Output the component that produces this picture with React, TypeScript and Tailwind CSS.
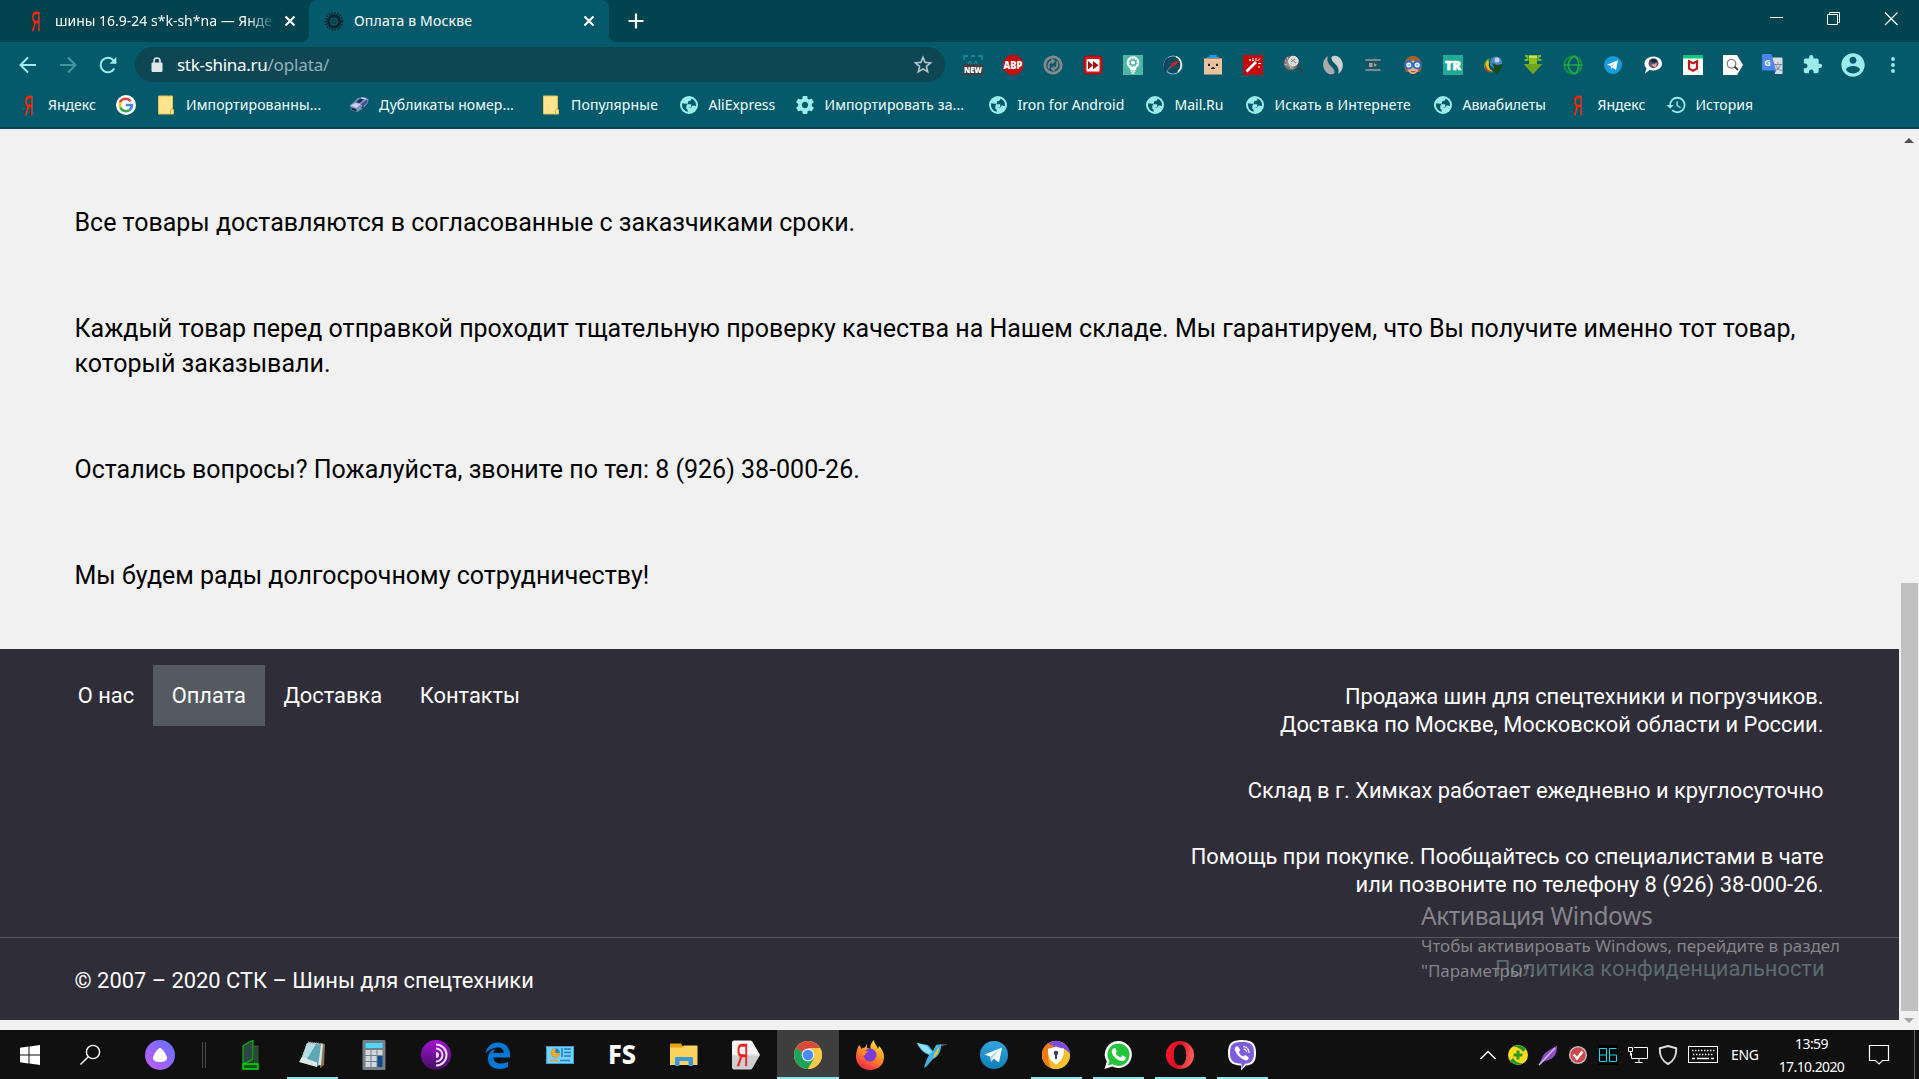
import type { ReactNode } from "react";

const Svg = ({ s = 20, vb = "0 0 20 20", children }: { s?: number; vb?: string; children: ReactNode }) => (
  <svg width={s} height={s} viewBox={vb} fill="none" className="block shrink-0 overflow-visible">
    {children}
  </svg>
);

/* ---------- browser icons ---------- */

const Ya = () => (
  <Svg>
    <text transform="translate(9.500 19.800) scale(0.45 1)" textAnchor="middle" fontFamily="Liberation Sans, sans-serif" fontSize="27.5" fill="#ff2400" stroke="#ff2400" strokeWidth="0.4">Я</text>
  </Svg>
);

const Google = () => (
  <Svg>
    <circle cx="10" cy="10" r="10" fill="#fff" />
    <path d="M15.2 6.2A6.2 6.2 0 0 0 4.6 7" stroke="#ea4335" strokeWidth="2.5" transform="translate(-.6 .2)" />
    <path d="M4.5 7.2a6.2 6.2 0 0 0 0 5.6" stroke="#fbbc05" strokeWidth="2.5" />
    <path d="M4.4 12.6A6.2 6.2 0 0 0 13.8 14.8" stroke="#34a853" strokeWidth="2.5" />
    <path d="M10 10h5.9a6 6 0 0 1-2.2 5" stroke="#4285f4" strokeWidth="2.5" />
  </Svg>
);

const Folder = () => (
  <Svg>
    <path d="M2.5 1h14v13l1 1v4h-15z" fill="#ffe48f" stroke="#e6c34e" />
    <path d="M14.5 18.5v-3.5l2-1.5" stroke="#d9b23c" />
  </Svg>
);

const Car = () => (
  <Svg>
    <path d="M1 10l4-3 4-4 6-1 4.500 2-.5 4-5 5.500L8 17l-6-2z" fill="#7d93c4" />
    <path d="M7 7.500l4-4 5-.5-5 5z" fill="#1c2c5c" />
    <path d="M1.500 10.500L6.500 8l5 1.200-4 3.800z" fill="#c5d1ea" />
    <path d="M12 9l6-4.500.5 3-5 4z" fill="#3c528b" />
    <path d="M2 12.500l5 1.500 1 2.500-5-1.500zM12 13l2.500-2.500v3z" fill="#1b2442" />
    <path d="M12 3l5 1" stroke="#dbe5f5" strokeWidth="1.200" />
  </Svg>
);

const Globe = () => (
  <Svg>
    <circle cx="10" cy="10" r="9" fill="#9ceceb" />
    <path d="M11.500 3.200c.3 1.600-.3 2.600-1.900 2.800-1.300.2-1.100 1-.9 1.900.2 1-.6 1.300-2 1.300H3c-.2 3 1 5 3 6.500 1.400 1 2.600 1.200 3.500 1.200v-2c-1.200 0-1.800-.7-1.800-1.700v-1h4.200c.9 0 1.300-.7 1.300-1.300 0-.6.5-.9 1.200-.9h2.600c0-2.800-1.500-5.600-5.500-6.800z" fill="#045a6b" transform="rotate(8 10 10)" />
    <path d="M8 9.200h4.200v2.800H7.200z" fill="#9ceceb" />
  </Svg>
);

const Gear = () => (
  <Svg vb="1 1 22 22">
    <path fill="#9ceceb" d="M19.430 12.980c.04-.32.07-.64.07-.98s-.03-.66-.07-.98l2.110-1.650c.19-.15.24-.42.12-.64l-2-3.460c-.12-.22-.39-.3-.61-.22l-2.490 1c-.52-.4-1.080-.73-1.690-.98l-.38-2.650C14.460 2.180 14.250 2 14 2h-4c-.25 0-.46.18-.49.42l-.38 2.650c-.61.25-1.170.59-1.690.98l-2.490-1c-.23-.09-.49 0-.61.22l-2 3.460c-.13.22-.07.49.12.64l2.110 1.650c-.04.32-.07.65-.07.98s.03.66.07.98l-2.110 1.650c-.19.15-.24.42-.12.64l2 3.460c.12.22.39.3.61.22l2.490-1c.52.4 1.080.73 1.690.98l.38 2.650c.03.24.24.42.49.42h4c.25 0 .46-.18.49-.42l.38-2.650c.61-.25 1.170-.59 1.690-.98l2.490 1c.23.09.49 0 .61-.22l2-3.460c.12-.22.07-.49-.12-.64l-2.110-1.650zM12 15.500c-1.930 0-3.500-1.570-3.500-3.500s1.570-3.500 3.500-3.500 3.500 1.570 3.500 3.500-1.570 3.500-3.500 3.500z" />
  </Svg>
);

const History = () => (
  <Svg vb="1 1 22 22">
    <path fill="#9ceceb" d="M13.500 3a9 9 0 0 0-9 9H1.500l3.900 3.900.07.14L9.500 12H6.500c0-3.870 3.130-7 7-7s7 3.130 7 7-3.130 7-7 7c-1.930 0-3.680-.79-4.940-2.060l-1.420 1.420A8.954 8.954 0 0 0 13.500 21a9 9 0 0 0 0-18zm-1 5v5l4.280 2.540.72-1.210-3.500-2.080V8h-1.500z" />
  </Svg>
);

const TireIcon = () => (
  <Svg>
    <circle cx="10" cy="10.500" r="5.600" stroke="#10262e" strokeWidth="3.200" />
    <circle cx="10" cy="10.500" r="8.300" stroke="#10262e" strokeWidth="2" strokeDasharray="1.300 1.500" />
    <circle cx="10" cy="10.500" r="2" stroke="#12303a" strokeWidth="1.200" />
  </Svg>
);

const Close = () => (
  <Svg s={10} vb="0 0 10 10">
    <path d="M.5.5l9 9M9.500.5l-9 9" stroke="#fff" strokeWidth="2.100" />
  </Svg>
);

const extensions: ReactNode[] = [
  <Svg>
    <path d="M1 5V1h4M8 1h4M15 1h4v4" stroke="#1695a5" strokeWidth="1.300" />
    <path d="M5 9l2-3 2 3M11 9l2-3 1 3" stroke="#1695a5" />
    <rect x="0" y="9" width="20" height="11" fill="#3c4043" />
    <text x="10" y="18" textAnchor="middle" fontFamily="Open Sans, sans-serif" fontWeight="800" fontSize="9" textLength="18" lengthAdjust="spacingAndGlyphs" fill="#fff">NEW</text>
  </Svg>,
  <Svg>
    <path d="M6 0h8l6 6v8l-6 6H6l-6-6V6z" fill="#c70d0d" />
    <text x="10" y="14" textAnchor="middle" fontFamily="Open Sans, sans-serif" fontWeight="800" fontSize="11" textLength="19" lengthAdjust="spacingAndGlyphs" fill="#fff">ABP</text>
  </Svg>,
  <Svg>
    <circle cx="10" cy="10" r="8.200" stroke="#888" strokeWidth="2.800" />
    <path d="M6 13.500C4.800 10 6 6.500 9.500 6M14 6.500c1.200 3.500 0 7-3.500 7.500" stroke="#888" strokeWidth="2" />
    <path d="M8.500 3l4 3.200-4 3.300zM11.500 17l-4-3.200 4-3.300z" fill="#888" />
  </Svg>,
  <Svg>
    <rect x="1" y="1" width="18" height="18" rx="3" fill="#d31616" stroke="#9c1111" />
    <rect x="3.500" y="4" width="13" height="12.500" rx="1" fill="#fff" />
    <path d="M5 6l5 4.200L5 14.500zM10 6l5.500 4.200L10 14.500z" fill="#a01010" />
  </Svg>,
  <Svg>
    <rect width="20" height="20" fill="#4cb8a4" />
    <path d="M10 1.200a6.300 6.300 0 0 1 3.500 11.500L12.800 15H7.200l-.7-2.300A6.300 6.300 0 0 1 10 1.200z" fill="#fff" />
    <circle cx="10" cy="7.500" r="2.800" stroke="#4cb8a4" strokeWidth="1.500" />
    <circle cx="10" cy="7.500" r="4" stroke="#4cb8a4" strokeWidth="1" strokeDasharray="1.600 1.540" />
    <path d="M7.500 16.200h5M8.300 18.200h3.400" stroke="#fff" strokeWidth="1.300" />
  </Svg>,
  <Svg>
    <circle cx="10" cy="10" r="9" fill="#0c4b5c" stroke="#7fb2c8" strokeWidth="1.100" />
    <path d="M13 1.600a9 9 0 0 1 2 15" stroke="#fff" strokeWidth="1.500" />
    <path d="M3 17C1 13 1 7 5 3" stroke="#153a63" strokeWidth="1.800" />
    <path d="M7 13l2-5 7-3-2 4-5 3-2.500 2z" fill="#c7262f" />
    <path d="M4 16l4-5" stroke="#5f7fa3" />
  </Svg>,
  <Svg>
    <path d="M6.500 0h7v2H16v2H4V2h2.500z" fill="#2196f3" />
    <rect x="1" y="3.500" width="18" height="16" fill="#e8c29c" />
    <path d="M1 3.500h18" stroke="#b58b62" />
    <path d="M5 8.700h2v2.300H5zM13 8.700h2v2.300h-2z" fill="#222" />
    <path d="M8 13l2-1 2 1v1H8z" fill="#222" />
  </Svg>,
  <Svg>
    <rect width="20" height="20" rx="1" fill="#c60a0a" />
    <path d="M3.500 16.500L13 7" stroke="#fff" strokeWidth="2.600" />
    <path d="M13 3v3M15 8.500h3M14.500 6l2.500-2.500M7 4v2M6 5h2M10 3v2M16 11v2M9 5.500h2" stroke="#fff" />
  </Svg>,
  <Svg>
    <path d="M13 10l7 7" stroke="#3a3a3a" strokeWidth="2" />
    <circle cx="8" cy="8" r="7.300" fill="#777" stroke="#4a4a4a" strokeDasharray="2 1" />
    <path d="M2 5l8 9M1 9l10 3M4 2l4 12" stroke="#b7b7b7" />
    <circle cx="10.500" cy="6" r="4.700" fill="#d5d5d5" stroke="#f1f1f1" />
    <path d="M8 4l5 4M8 7l4-3" stroke="#888" />
  </Svg>,
  <Svg>
    <path d="M5 1C-2 5-1 15 5 18.500c3 1.500 6 1 6.500-1C12 14 8 12 6 9 4 6 4 3 5 1z" fill="#a9a9a9" />
    <path d="M15 19C22 15 21 5 15 1.500 12 0 9 .5 8.500 2.500 8 6 12 8 14 11c2 3 2 6 1 8z" fill="#cfcfcf" />
  </Svg>,
  <Svg>
    <path d="M2.500 5h15M2.500 15h15" stroke="#7d8a8e" strokeWidth="1.800" />
    <path d="M5 7h10v6H5z" fill="#2e4b52" />
    <path d="M6 8h3.500v4H6zM11 8l3 2-3 2z" fill="#99a5a8" />
  </Svg>,
  <Svg>
    <path d="M3 17C0 11 1 1 10 1s10 10 7 16z" fill="#a6602b" />
    <path d="M4.500 8Q10 3 15.500 8v6c-1 4-4 5-5.500 5s-4.500-1-5.500-5z" fill="#f0b48c" />
    <circle cx="5.800" cy="10" r="3.500" fill="#fff" stroke="#2d6fc9" strokeWidth="2" />
    <circle cx="14.200" cy="10" r="3.500" fill="#fff" stroke="#2d6fc9" strokeWidth="2" />
    <circle cx="5.800" cy="10" r="1.300" fill="#8dc4ee" />
    <circle cx="14.200" cy="10" r="1.300" fill="#8dc4ee" />
    <path d="M8 16.200q2 1 4 0" stroke="#d33c33" strokeWidth="1.200" />
  </Svg>,
  <Svg>
    <rect width="20" height="20" fill="#22ab94" />
    <text x="10" y="15" textAnchor="middle" fontFamily="Open Sans, sans-serif" fontWeight="800" fontSize="12.500" textLength="16" lengthAdjust="spacingAndGlyphs" fill="#fff" stroke="#fff" strokeWidth=".6">TR</text>
  </Svg>,
  <Svg>
    <circle cx="13" cy="7.500" r="6" fill="#5186c4" />
    <circle cx="14" cy="5" r="2.500" fill="#b7d6f2" />
    <path d="M7 3C0 5-1 13 4 16c3 2 6 1 7 1-3-2-6-4-6-7s1-5 2-7z" fill="#58a13e" />
    <path d="M5 5C2 8 2 13 6 15.500l3 .5C6 14 5 11 6 7z" fill="#f4c21f" />
    <path d="M3 10c0 4 3 6 6 6.500L6 17c-4-1-5-5-3-7z" fill="#d3331c" />
    <path d="M9 8l5 2 5-1-1 5-5 5-3-3 1-3z" fill="#174a1c" />
  </Svg>,
  <Svg>
    <path d="M6 0h8v9h5l-9 10L1 9h5z" fill="#8cc21d" />
    <path d="M2 1h2.500v4H1.500M18 1h-2.500v4h3" stroke="#76b82a" strokeWidth="2" />
    <path d="M6 2h8" stroke="#c4e55b" strokeWidth="2" />
    <path d="M1 9h18l-9 10z" fill="#6fa51a" />
  </Svg>,
  <Svg>
    <circle cx="10" cy="10" r="8.700" stroke="#138a3b" strokeWidth="2.200" />
    <path d="M12 1c-9 4-9 14 0 18M12 1c5 5 5 13 0 18M1 10h18" stroke="#22aa4b" strokeWidth="1.700" />
  </Svg>,
  <Svg>
    <circle cx="10" cy="10" r="9" fill="#179cde" />
    <path d="M4 9.800L15 5.300 13 15l-3.500-2.600L8 14l-.3-3z" fill="#fff" />
    <path d="M8 11l5-4-3.800 4.700z" fill="#9fd2ee" />
  </Svg>,
  <Svg>
    <path d="M10.500 1.500c5 0 8.500 3 8.500 7s-3.500 7-8.500 7l-4-.5-4.500 3.500L3.500 13C2 12 1.500 10.500 1.500 8.500c0-4 4-7 9-7z" fill="#fff" />
    <circle cx="10.500" cy="8.300" r="5" fill="#5b5470" />
    <path d="M8 10l5 3 1-5z" fill="#d7a794" />
    <path d="M6.500 6q4-4 8 0l-3 2z" fill="#1f2337" />
  </Svg>,
  <Svg>
    <rect width="20" height="20" fill="#fff" />
    <rect width="20" height="3.500" fill="#08c77c" />
    <path d="M6 6.200l4 2 4-2v7.500L10 15.800l-4-2.100z" stroke="#c01818" strokeWidth="2.200" />
  </Svg>,
  <Svg>
    <path d="M0 0h14l6 10-6 10H0z" fill="#fff" />
    <circle cx="8.500" cy="8.800" r="4.300" stroke="#777" strokeWidth="1.200" />
    <path d="M11.500 11.500l3.500 3.500" stroke="#444" strokeWidth="1.800" />
  </Svg>,
  <Svg s={21} vb="0 0 21 21">
    <path d="M8 3.500h11.500a1 1 0 0 1 1 1v15.500H13z" fill="#d9dce0" />
    <text x="16" y="15.500" textAnchor="middle" fontSize="9" fontFamily="Noto Sans CJK SC, sans-serif" fill="#6b7b86">文</text>
    <path d="M1 0h8.500l4.500 16.500H1a1 1 0 0 1-1-1V1a1 1 0 0 1 1-1z" fill="#4a86f0" />
    <path d="M10.500 16.500H14L12.500 20z" fill="#2354c7" />
    <text x="5.500" y="11.500" textAnchor="middle" fontSize="9" fontWeight="700" fontFamily="Open Sans, sans-serif" fill="#fff">G</text>
  </Svg>,
  <Svg vb="1 1 23 23">
    <path fill="#9ceceb" d="M20.500 11H19V7c0-1.100-.9-2-2-2h-4V3.500a2.500 2.500 0 0 0-5 0V5H4c-1.100 0-1.990.9-1.990 2v3.800H3.500c1.490 0 2.700 1.210 2.700 2.700s-1.210 2.700-2.700 2.700H2V20c0 1.100.9 2 2 2h3.800v-1.500c0-1.490 1.210-2.700 2.700-2.700 1.490 0 2.700 1.210 2.700 2.700V22H17c1.100 0 2-.9 2-2v-4h1.500a2.500 2.500 0 0 0 0-5z" />
  </Svg>,
  <Svg s={28} vb="0 0 24 24">
    <path fill="#9ceceb" d="M12 2C6.480 2 2 6.480 2 12s4.480 10 10 10 10-4.480 10-10S17.520 2 12 2zm0 3c1.660 0 3 1.340 3 3s-1.340 3-3 3-3-1.340-3-3 1.340-3 3-3zm0 14.200a7.200 7.200 0 0 1-6-3.220c.03-1.990 4-3.080 6-3.080 1.990 0 5.970 1.090 6 3.080a7.200 7.200 0 0 1-6 3.220z" />
  </Svg>,
  <Svg>
    <circle cx="10" cy="4" r="1.900" fill="#9ceceb" />
    <circle cx="10" cy="10" r="1.900" fill="#9ceceb" />
    <circle cx="10" cy="16" r="1.900" fill="#9ceceb" />
  </Svg>,
];

const bookmarks: [ReactNode, string, string, string][] = [
  [<Ya />, "Яндекс", "w-[97.5px]", ""],
  [<Google />, "", "w-[39.500px]", ""],
  [<Folder />, "Импортированны...", "w-[193px]", "tracking-[0.12px] pl-px"],
  [<Car />, "Дубликаты номер...", "w-[192px]", "tracking-[0.06px] pl-px"],
  [<Folder />, "Популярные", "w-[138.5px]", "tracking-[0.18px] pl-px"],
  [<Globe />, "AliExpress", "w-[116px]", ""],
  [<Gear />, "Импортировать за...", "w-[193px]", "tracking-[0.1px]"],
  [<Globe />, "Iron for Android", "w-[157px]", "tracking-[0.05px]"],
  [<Globe />, "Mail.Ru", "w-[100px]", ""],
  [<Globe />, "Искать в Интернете", "w-[188px]", "tracking-[0.15px]"],
  [<Globe />, "Авиабилеты", "w-[135px]", ""],
  [<Ya />, "Яндекс", "w-[98px]", ""],
  [<History />, "История", "w-[100px]", ""],
];

function Browser() {
  return (
    <header className="h-[129px] border-b-2 border-[#01434f] bg-[#045a6b] font-['Noto_Sans',sans-serif] text-[14px] leading-5 text-white">
      <div className="flex h-[42px] bg-[#01434f]">
        <div className="flex w-[309px] items-center pl-[25.500px]">
          <Ya />
          <span className="ml-[9.500px] w-[219px] overflow-hidden whitespace-nowrap [mask-image:linear-gradient(to_right,black_88%,transparent_101%)]">шины 16.9-24 s*k-sh*na — Янде</span>
          <span className="ml-[11px]"><Close /></span>
        </div>
        <div className="relative flex w-[300px] items-center rounded-t-lg bg-[#045a6b] pl-[15px]">
          <i className="absolute bottom-0 -left-2 size-2 bg-[radial-gradient(circle_at_0_0,#01434f_8px,#045a6b_8.5px)]" />
          <i className="absolute -right-2 bottom-0 size-2 bg-[radial-gradient(circle_at_100%_0,#01434f_8px,#045a6b_8.5px)]" />
          <TireIcon />
          <span className="ml-[10px] w-[230px] tracking-[0.18px]">Оплата в Москве</span>
          <Close />
        </div>
        <div className="flex flex-1 items-center pl-[19px]">
          <Svg s={16} vb="0 0 16 16"><path d="M8 .5v15M.5 8h15" stroke="#fff" strokeWidth="2.200" /></Svg>
        </div>
        <div className="flex justify-end gap-[39px] pt-2.5 pr-[19px]">
          <Svg s={18} vb="-1 -1 18 18"><path d="M1 6.500h13" stroke="#fff" /></Svg>
          <Svg s={18} vb="-1 -1 18 18"><path d="M1.500 3.500h10v10h-10zM3.500 3.500v-2h10v10h-2" stroke="#fff" /></Svg>
          <Svg s={18} vb="-1 -1 18 18"><path d="M2 1.500l12.500 12.500M14.500 1.500L2 14" stroke="#fff" strokeWidth="1.200" /></Svg>
        </div>
      </div>
      <div className="flex h-[45px] items-center pl-[18px]">
        <div className="flex w-[117px] gap-5">
          <Svg><path d="M18 10H3M10 2.500L2.500 10l7.500 7.500" stroke="#9ceceb" strokeWidth="2" /></Svg>
          <Svg><path d="M2 10h15M10 2.500l7.500 7.500-7.500 7.500" stroke="#3f98a1" strokeWidth="2" /></Svg>
          <Svg><path d="M16.300 13.500A7.300 7.300 0 1 1 15.500 5.300L18 8" stroke="#9ceceb" strokeWidth="2" /><path d="M18.300 2v6.700h-6.700z" fill="#9ceceb" /></Svg>
        </div>
        <div className="flex h-[35px] w-[810px] items-center rounded-full bg-[#0e4654] pl-[14px] text-[17px] leading-6">
          <Svg s={16} vb="0 0 16 16"><path d="M5 6V4a3 3 0 0 1 6 0v2" stroke="#e0e6e8" strokeWidth="1.600" /><rect x="2.500" y="5.500" width="11" height="9.500" rx="1" fill="#e0e6e8" /></Svg>
          <span className="ml-[12px] flex-1 tracking-[-0.3px]">stk-shina.ru<span className="tracking-[-0.15px] text-[#94b1b8]">/oplata/</span></span>
          <span className="mr-[12px]"><Svg><path d="M10 2.300l2.100 5.100 5.500.4-4.200 3.600 1.300 5.400L10 13.900l-4.700 2.900 1.300-5.400-4.200-3.600 5.500-.4z" stroke="#b3c4c9" strokeWidth="1.600" /></Svg></span>
        </div>
        <div className="ml-[7.500px] flex items-center">
          {extensions.map((e, i) => <span key={i} className="flex w-10 justify-center">{e}</span>)}
        </div>
      </div>
      <div className="flex h-9 items-center pl-[18.500px] text-[#f2ffff]">
        {bookmarks.map(([icon, label, w, cls], i) => (
          <div key={i} className={`${w} flex shrink-0 items-center gap-[9.500px] whitespace-nowrap`}>
            {icon}
            <span className={cls}>{label}</span>
          </div>
        ))}
      </div>
    </header>
  );
}

/* ---------- page ---------- */

function Page() {
  return (
    <div className="relative flex h-[901px] bg-[#f1f1f1] font-[Roboto,sans-serif]">
      <div className="flex w-[1899px] flex-col">
        <main className="h-[520px] pt-[76px] pl-[74.500px] text-[25px] leading-[35px] text-black">
          <p>Все товары доставляются в согласованные с заказчиками сроки.</p>
          <p className="mt-[71px] whitespace-nowrap">Каждый товар перед отправкой проходит тщательную проверку качества на Нашем складе. Мы гарантируем, что Вы получите именно тот товар,<br />который заказывали.</p>
          <p className="mt-[71px]">Остались вопросы? Пожалуйста, звоните по тел: 8 (926) 38-000-26.</p>
          <p className="mt-[71px]">Мы будем рады долгосрочному сотрудничеству!</p>
        </main>
        <footer className="flex h-[371px] flex-col bg-[#2f2d37] text-[21.875px] leading-[28px] text-white">
          <div className="flex h-[288px] justify-between pr-[75.500px] pl-[59px]">
            <nav className="flex h-[77px] pt-4">
              <a className="px-[18.75px] pt-[17px]">О нас</a>
              <a className="bg-[#545a60] px-[18.75px] pt-[17px]">Оплата</a>
              <a className="px-[18.75px] pt-[17px]">Доставка</a>
              <a className="px-[18.75px] pt-[17px]">Контакты</a>
            </nav>
            <div className="flex flex-col gap-[38px] pt-[34px] text-right">
              <p>Продажа шин для спецтехники и погрузчиков.<br />Доставка по Москве, Московской области и России.</p>
              <p>Склад в г. Химках работает ежедневно и круглосуточно</p>
              <p>Помощь при покупке. Пообщайтесь со специалистами в чате<br />или позвоните по телефону 8 (926) 38-000-26.</p>
            </div>
          </div>
          <div className="flex flex-1 justify-between border-t border-[#5a5961] pr-[74.500px] pl-[74.500px]">
            <p className="pt-[29px]">© 2007 – 2020 СТК – Шины для спецтехники</p>
            <a className="pt-[17px] text-[#5b6b6f]">Политика конфиденциальности</a>
          </div>
        </footer>
      </div>
      <div className="flex w-5 flex-col items-center">
        <div className="h-[454px] pt-[9px]"><svg width="10" height="5" viewBox="0 0 10 5" className="block"><path d="M0 5L5 0l5 5z" fill="#505050" /></svg></div>
        <div className="h-[428px] w-[17px] bg-[#c1c1c1]" />
        <div className="pt-[4px]"><Svg s={10} vb="0 0 10 10"><path d="M0 3h10L5 8z" fill="#a3a3a3" /></Svg></div>
      </div>
      <div className="pointer-events-none absolute top-[767px] left-[1421px] font-['Noto_Sans',sans-serif] text-[17px] leading-[25px] tracking-[-0.03px] text-[#96969b]/85">
        <div className="text-[24.500px] leading-[40px] tracking-[-0.4px]">Активация Windows</div>
        <div className="mt-[-3px] w-[440px] whitespace-nowrap">Чтобы активировать Windows, перейдите в раздел<br />"Параметры".</div>
      </div>
    </div>
  );
}

/* ---------- taskbar ---------- */

const apps: [ReactNode, 0 | 1 | 2][] = [
  [<Svg s={32} vb="0 0 32 32">
    <path d="M9 7L19 1.500v22L9 25z" fill="#2a4743" />
    <path d="M9 25V7l6-4 4-1.500V20L9.500 25" stroke="#08c508" strokeWidth="1.100" />
    <path d="M20 7h4v17h-4z" fill="#27443f" stroke="#3a5b1c" />
    <path d="M9 25h15v5H9z" fill="#0a5a0a" stroke="#0be00b" strokeWidth="1.400" />
  </Svg>, 0],
  [<Svg s={32} vb="0 0 32 32">
    <path d="M24 4l5 1-1 21-4 3z" fill="#8a7552" />
    <path d="M12 3l15 2-2 21-8 1z" fill="#d7e4e8" />
    <path d="M11 4l14 1.500-3 22L4 23z" fill="#5fa6b4" />
    <path d="M11 4l9 1-9 15-6 1z" fill="#b5dde3" />
    <path d="M3 23l3-5 15 5.500V28z" fill="#dce8ea" />
    <path d="M12 3l15 2" stroke="#8b8b8b" strokeWidth="1.500" strokeDasharray="1 1" />
  </Svg>, 1],
  [<Svg s={32} vb="0 0 32 32">
    <rect x="4.500" y="1" width="23" height="30" rx="1" fill="#74808a" />
    <rect x="7.500" y="4" width="17" height="5" fill="#4dd9fb" />
    <path d="M7.500 11h5v5h-5zM13.500 11h5v5h-5zM19.500 11h5v5h-5zM7.500 17h5v5h-5zM13.500 17h5v5h-5zM7.500 23h5v5h-5zM13.500 23h5v5h-5z" fill="#d1d7dd" />
    <path d="M19.500 17h5v11h-5z" fill="#114a8b" />
  </Svg>, 0],
  [<Svg s={32} vb="0 0 32 32">
    <defs><linearGradient id="tor" x1="0" y1="0" x2="0" y2="1"><stop stopColor="#a411d8" /><stop offset="1" stopColor="#43105c" /></linearGradient></defs>
    <circle cx="16" cy="16" r="15" fill="url(#tor)" />
    <path d="M16 5.500a10.500 10.500 0 0 1 0 21M16 9.500a6.500 6.500 0 0 1 0 13" stroke="#f3dffb" strokeWidth="2" />
    <path d="M16 13a3 3 0 0 1 0 6z" fill="#f3dffb" />
  </Svg>, 0],
  [<Svg s={32} vb="0 0 32 32">
    <path fill="#0078d7" d="M3.500 14.500C4.500 8 9.500 3.500 16 3.500c7.500 0 12 5.500 12 12v3H11.500c0 4 3.500 6 7.500 6 3 0 5.500-1 7-2v5.500c-2 1.200-5 2-8.500 2C11 30 6 26.500 6 20c0-5 3-9 7.500-10.500-1.500 1.500-2 3-2 4.500h10.300c0-3-1.800-5.500-5.300-5.500-5.500 0-10 2.500-13 6z" />
  </Svg>, 0],
  [<Svg s={32} vb="0 0 32 32">
    <rect x="2.500" y="7.500" width="27" height="17" fill="#7ad1f7" stroke="#3aa0dc" />
    <circle cx="11.500" cy="14" r="4.500" fill="#1588d1" />
    <path d="M11.500 14V9.500A4.500 4.500 0 1 0 16 14z" fill="#f7a71b" />
    <path d="M20 10h7M20 13.500h7M20 17h7M18 9v9" stroke="#1c80c8" strokeWidth="1.600" />
    <path d="M6 21.500h8" stroke="#f39a1b" strokeWidth="1.500" /><path d="M16 21.500h10" stroke="#1c80c8" strokeWidth="1.500" />
  </Svg>, 0],
  [<Svg s={32} vb="0 0 32 32">
    <text x="16" y="25" textAnchor="middle" fontFamily="Noto Sans, Open Sans, sans-serif" fontWeight="800" fontSize="26" textLength="28" lengthAdjust="spacingAndGlyphs" fill="#fff">FS</text>
  </Svg>, 0],
  [<Svg s={32} vb="0 0 32 32">
    <path d="M2 4.500h11l2 3H29V12H2z" fill="#e3a30d" />
    <path d="M2 8.500h12l2-2h13.500V26H2z" fill="#fdd35f" />
    <path d="M7 27v-7.500c0-1 .6-1.500 1.500-1.500h15c.9 0 1.500.5 1.500 1.500V27h-4.500v-5h-9v5z" fill="#3b96dc" />
  </Svg>, 0],
  [<Svg s={32} vb="0 0 32 32">
    <defs><linearGradient id="yb" x1="0" y1="0" x2="0" y2="1"><stop offset=".45" stopColor="#f4f4f4" /><stop offset=".55" stopColor="#cfcfcf" /></linearGradient></defs>
    <path d="M4 1.500h16c1.500 0 2 .5 2.700 1.800L30 16l-7.300 12.700c-.7 1.300-1.200 1.800-2.700 1.800H4c-1 0-2-1-2-2v-25c0-1 1-2 2-2z" fill="url(#yb)" />
    <text transform="translate(12.500 27) scale(0.53 1)" textAnchor="middle" fontFamily="Liberation Sans, sans-serif" fontSize="31" fill="#e8201a" stroke="#e8201a" strokeWidth=".5">Я</text>
  </Svg>, 0],
  [<Svg s={32} vb="0 0 32 32">
    <circle cx="16" cy="16" r="14" fill="#fdc945" />
    <path d="M16 16L3.900 9A14 14 0 0 1 28.100 9z" fill="#d64a3c" />
    <path d="M28.100 9H16v7z" fill="#d64a3c" />
    <path d="M3.900 9a14 14 0 0 0 12.100 21l6-10.500L16 16z" fill="#1fa15e" />
    <path d="M22 19.500L16 30a14 14 0 0 0 12.100-21H16z" fill="#fdc945" />
    <circle cx="16" cy="16" r="6.400" fill="#e9eefb" />
    <circle cx="16" cy="16" r="5.200" fill="#4c8bf5" />
  </Svg>, 2],
  [<Svg s={32} vb="0 0 32 32">
    <defs><linearGradient id="ff" x1=".8" y1="0" x2=".3" y2="1"><stop stopColor="#ffe837" /><stop offset=".45" stopColor="#ff9a21" /><stop offset="1" stopColor="#f2244f" /></linearGradient></defs>
    <path d="M5 6c1 1 2 2.500 2 4 1.500-1 3-1.500 4-1.500L13 5v4c2 0 2.500 1 4 1C15 7 18 3 20 1c0 4 3 5 4 9l1-3c4 4 5 8 5 11 0 8-6 13-14 13S2 25 2 18C2 13 3.500 9 5 6z" fill="url(#ff)" />
    <circle cx="16" cy="16" r="6.500" fill="#7b3bd8" />
    <path d="M7 11c3 1 5 0 8 2-3 0-4 2-4 3.500C8 17 6 14 7 11z" fill="#ff8a22" />
  </Svg>, 0],
  [<Svg s={32} vb="0 0 32 32">
    <path d="M1 4l11 2 5 6 3-6 6-1 5 .5-6 1.500c0 6-3 11-8 13L10 28l-2 .5L10.500 21 13 16C7 14 3 9 1 4z" fill="#46b2df" />
    <path d="M1 4l10 3 5 6-3 2C8 13 4 9 1 4z" fill="#8fe0f3" />
    <path d="M23 8c0 5-2 9-6 11 1-4 3-7 6-11z" fill="#e6c531" />
    <path d="M25 5.500l6 0" stroke="#5a4338" strokeWidth="1.200" />
  </Svg>, 0],
  [<Svg s={32} vb="0 0 32 32">
    <defs><linearGradient id="tg" x1="0" y1="0" x2="0" y2="1"><stop stopColor="#34a6de" /><stop offset="1" stopColor="#0d7db8" /></linearGradient></defs>
    <circle cx="16" cy="16" r="14" fill="url(#tg)" />
    <path d="M6.500 15.500L24 8.500 21 23.500l-5-3.800-3 3-.7-5z" fill="#f4f9fc" />
    <path d="M12.300 17.700L21 11l-6.500 8-1.500 3.700z" fill="#b0cee0" />
  </Svg>, 0],
  [<Svg s={32} vb="0 0 32 32">
    <circle cx="16" cy="16" r="14" fill="#f9b92c" />
    <path d="M8 4.500a14 14 0 0 1 22 10.500C25 8 16 7 8 9z" fill="#7e4be0" />
    <path d="M8 4.500A14 14 0 0 0 11 29C7 22 7 12 14 7z" fill="#f47a14" />
    <path d="M30 15a14 14 0 0 1-19 14c8 0 14-5 15-17z" fill="#efc52b" />
    <path d="M16 7.500c3 1.500 5 2 8 2 .5 7-2 12.500-8 16-6-3.500-8.500-9-8-16 3 0 5-.5 8-2z" fill="#fff" />
    <circle cx="16" cy="14" r="2.300" fill="#3d3f58" /><path d="M15 15h2v5h-2z" fill="#3d3f58" />
  </Svg>, 1],
  [<Svg s={32} vb="0 0 32 32">
    <path d="M16.500 2a13.500 13.500 0 1 1-6.300 25.500L2.500 30l2.300-7.500A13.500 13.500 0 0 1 16.500 2z" fill="#fff" />
    <path d="M16.500 4.500a11.200 11.200 0 1 1-6 20.700L6 26.500l1.400-4.400A11.200 11.200 0 0 1 16.500 4.500z" fill="#25c43c" />
    <path d="M12.200 9.200c.8-.3 1.200 0 1.500.7l.9 2.100c.2.700-.3 1.200-1 2 1.200 2.300 2.800 3.700 4.900 4.500l1.300-1.600c.4-.4.8-.4 1.300-.1l2.200 1.100c.6.300.6.700.4 1.500-.5 1.900-2.300 2.900-4.300 2.600-5.200-1-8.400-4.500-9.600-8.400-.5-2 .8-4 2.400-4.400z" fill="#fff" />
  </Svg>, 1],
  [<Svg s={32} vb="0 0 32 32">
    <defs><linearGradient id="op" x1="0" y1="0" x2="1" y2=".2"><stop stopColor="#ff1b2d" /><stop offset=".5" stopColor="#d3101f" /><stop offset="1" stopColor="#ff5a55" /></linearGradient></defs>
    <path fillRule="evenodd" d="M16 2a14 14 0 1 0 0 28 14 14 0 0 0 0-28zm0 3.500c4 0 6.200 4.500 6.200 10.500S20 26.500 16 26.500 9.800 22 9.800 16 12 5.500 16 5.500z" fill="url(#op)" />
  </Svg>, 1],
  [<Svg s={32} vb="0 0 32 32">
    <path d="M16 1c10 0 14 3 14 13 0 9-3 12-10 12.500L15 31.500v-5C5.500 26 2 23 2 14 2 4 6 1 16 1z" fill="#fff" />
    <path d="M16 3c9 0 12 2.500 12 11 0 8-3 10.500-9 10.700L15.500 30v-5.300C7 24.500 4 22 4 14 4 5.500 7 3 16 3z" fill="#7d5cdd" />
    <path d="M10.500 7.500c1-.5 1.500 0 2.200 1l1.300 2c.4.900-.2 1.400-1.200 2.200.8 2.500 2.200 4 4.500 4.800.8-1 1.300-1.700 2.300-1.200l2.500 1.700c.9.800.8 1.200 0 2.200-1 1.200-1.800 1.500-3 1-5.500-2.400-8.700-5.700-10.400-10.700-.3-1.200.6-2.400 1.800-3z" fill="#fff" />
    <path d="M17 7.500c4 .2 6 2.500 6 6.500M17.500 10c2 .2 3 1.300 3.200 3.300" stroke="#fff" strokeWidth="1.200" />
  </Svg>, 1],
];

function Taskbar() {
  return (
    <div className="flex h-[49px] bg-[#101010] font-['Noto_Sans',sans-serif] text-[14px] text-white">
      <div className="flex w-15 items-center justify-center"><Svg s={20} vb="0 0 20 20"><path d="M0 2.800L8.500 1.600V9.500H0zM9.500 1.500L20 0v9.500H9.500zM0 10.500h8.500v8L0 17.300zM9.500 10.500H20V20L9.500 18.600z" fill="#fff" /></Svg></div>
      <div className="flex w-15 items-center justify-center"><Svg s={22} vb="0 0 22 22"><circle cx="14" cy="8" r="6.600" stroke="#fff" strokeWidth="1.400" /><path d="M9.300 12.700L1.500 20.500" stroke="#fff" strokeWidth="1.500" /></Svg></div>
      <div className="flex w-20 items-center justify-center">
        <Svg s={32} vb="0 0 32 32">
          <defs><linearGradient id="al" x1="0" y1="1" x2="1" y2="0"><stop stopColor="#c55bff" /><stop offset="1" stopColor="#6172ff" /></linearGradient></defs>
          <circle cx="16" cy="16" r="15" fill="url(#al)" />
          <path d="M16 9c2 0 7 7 7 10 0 2.500-3 4-7 4s-7-1.500-7-4c0-3 5-10 7-10z" fill="#fff" />
        </Svg>
      </div>
      <div className="flex w-[19px] items-center"><span className="ml-0.5 h-[26px] w-1 border-x border-[#4a4a4a]" /></div>
      <div className="flex">
        {apps.map(([icon, state], i) => (
          <div key={i} className={`flex h-[49px] w-[62px] justify-center ${state === 2 ? "border-b-2 border-[#8ce6ef] bg-[#3e3e3e] bg-clip-border" : ""}`}>
            <div className={`flex h-[49px] w-[51px] items-center justify-center ${state === 1 ? "border-b-2 border-[#8ce6ef] pt-0.5" : ""}`}>{icon}</div>
          </div>
        ))}
      </div>
      <div className="ml-auto flex items-center">
        <span className="flex w-[30px] justify-center"><Svg s={18} vb="0 0 18 18"><path d="M1.500 13L9 5.500l7.500 7.500" stroke="#fff" strokeWidth="1.400" /></Svg></span>
        <span className="flex w-[30px] justify-center">
          <Svg><circle cx="10" cy="10" r="10" fill="#ffdc1e" /><path d="M5 1.500Q12-2 18 4l-3 3Q12 2 5 1.500zM15 18.500Q8 22 2 16l3-3q3 5 10 5.500z" fill="#1f9a2a" /><path d="M10 5.500v9M5.500 10h9" stroke="#2e9a24" strokeWidth="3" /></Svg>
        </span>
        <span className="flex w-[30px] justify-center">
          <Svg><path d="M1 20L4 13C6 7 12 5 19 .5 19 6 18 11 13 14l-7 2.500z" fill="#8d4fc4" /><path d="M1 20L17 3" stroke="#dcbaf5" strokeWidth="1.400" /></Svg>
        </span>
        <span className="flex w-[30px] justify-center">
          <Svg><circle cx="10" cy="10" r="8.300" fill="#cf4548" stroke="#bbb3b3" strokeWidth="1.600" /><path d="M5.500 9.500l3.500 4 5.500-7" stroke="#fff" strokeWidth="2.600" /></Svg>
        </span>
        <span className="flex w-[30px] justify-center">
          <Svg><rect width="20" height="20" fill="#000" /><path d="M1.500 3.500h7v13h-7zM1.500 10h7M18.500 3.500h-7v13h7V10h-7" stroke="#14dfee" /></Svg>
        </span>
        <span className="flex w-[30px] justify-center">
          <Svg><path d="M6 2.500h13.500v11h-16V8M11 13.500v4M7 17.500h7.500M.5 2.500h4v4h-4zM2.500 6.500v4" stroke="#fff" /></Svg>
        </span>
        <span className="flex w-[30px] justify-center">
          <Svg><path d="M10 1l8.300 2.300c0 8-2 12.500-8.300 15.700C3.700 15.800 1.700 11.300 1.700 3.300z" stroke="#dcdcdc" strokeWidth="2" strokeLinejoin="round" /></Svg>
        </span>
        <span className="flex w-[40px] justify-center">
          <svg width="30" height="18" viewBox="0 0 30 18" fill="none"><rect x=".5" y=".5" width="29" height="16" stroke="#fff" /><path d="M4 4.500h23M5 8.500h20" stroke="#fff" strokeWidth="1.300" strokeDasharray="1.400 1.600" /><path d="M4 12.500h3M9 12.500h12M23 12.500h3" stroke="#fff" strokeWidth="1.300" /></svg>
        </span>
        <span className="w-[45px] pl-2 tracking-[-0.3px]">ENG</span>
        <span className="flex w-[87px] flex-col items-center leading-[23px] tracking-[-0.6px]">
          <span>13:59</span>
          <span>17.10.2020</span>
        </span>
        <span className="flex w-[59px] pl-[14px]"><Svg s={20} vb="0 0 20 20"><path d="M.5.500h19v15h-6L10 19l-3.500-3.500h-6z" stroke="#fff" strokeWidth="1.200" /></Svg></span>
        <span className="mr-1 h-[49px] w-px bg-[#666]" />
      </div>
    </div>
  );
}

export default function App() {
  return (
    <div className="h-[1079px] w-[1919px] overflow-hidden bg-[#f0f0f0]">
      <Browser />
      <Page />
      <Taskbar />
    </div>
  );
}
